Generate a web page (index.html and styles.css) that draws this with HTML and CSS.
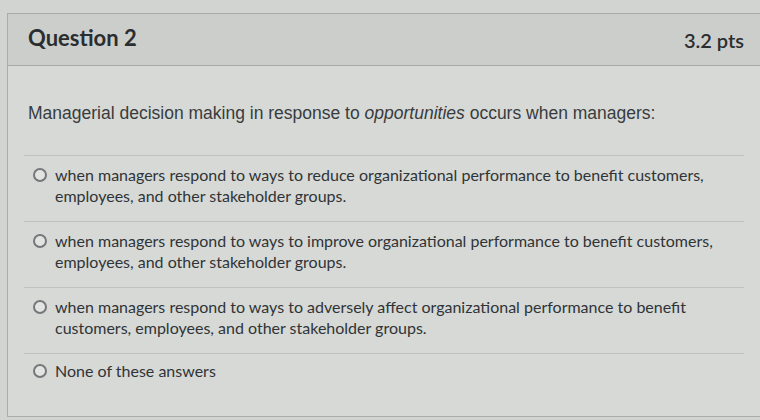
FILE: index.html
```html
<!DOCTYPE html>
<html>
<head>
<meta charset="utf-8">
<link rel="stylesheet" href="styles.css">
</head>
<body>
<div class="card">
  <div class="card-header">
    <h2 class="q-title">Question 2</h2>
    <span class="q-pts">3.2 pts</span>
  </div>
  <div class="card-body">
    <p class="q-text">Managerial decision making in response to <em>opportunities</em> occurs when managers:</p>
    <div class="answers">
      <label class="answer">
        <span class="radio"></span>
        <span class="answer-text">when managers respond to ways to reduce organizational performance to benefit customers, employees, and other stakeholder groups.</span>
      </label>
      <label class="answer">
        <span class="radio"></span>
        <span class="answer-text">when managers respond to ways to improve organizational performance to benefit customers, employees, and other stakeholder groups.</span>
      </label>
      <label class="answer">
        <span class="radio"></span>
        <span class="answer-text">when managers respond to ways to adversely affect organizational performance to benefit customers, employees, and other stakeholder groups.</span>
      </label>
      <label class="answer answer-last">
        <span class="radio"></span>
        <span class="answer-text">None of these answers</span>
      </label>
    </div>
  </div>
</div>
</body>
</html>
```

FILE: styles.css
```css
html, body {
  margin: 0;
  padding: 0;
  background: #d1d4d1;
  overflow: hidden;
}
body {
  width: 760px;
  height: 420px;
  padding-top: 13px;
  padding-left: 7px;
  box-sizing: border-box;
}
.card {
  width: 780px;
  border: 1px solid #a9adaa;
  background: #d6d9d6;
}
.card-header {
  height: 51px;
  background: #cbcecb;
  border-bottom: 1px solid #a7aba8;
  display: flex;
  align-items: center;
  justify-content: space-between;
  padding: 0 44px 0 20px;
}
.q-title {
  margin: 0 0 4px 0;
  font-family: Lato, "Liberation Sans", sans-serif;
  font-weight: 700;
  font-size: 22px;
  color: #2b2e30;
}
.q-pts {
  font-family: Lato, "Liberation Sans", sans-serif;
  font-weight: 600;
  font-size: 20px;
  color: #2b2e30;
  margin-top: 0;
}
.card-body {
  padding: 35px 0 0 20px;
}
.q-text {
  margin: 0 0 30px 0;
  font-family: "Liberation Sans", Arial, sans-serif;
  font-size: 17.5px;
  line-height: 24px;
  color: #383c3e;
}
.answers {
  width: 720px;
  margin-left: -4px;
}
.answer {
  display: flex;
  align-items: flex-start;
  border-top: 1px solid #bfc2bf;
  padding: 8px 20px 15px 9px;
  height: 42px;
}
.answer-last {
  height: 21px;
  padding-top: 6px;
  padding-bottom: 35px;
}
.radio {
  flex: none;
  box-sizing: border-box;
  width: 14px;
  height: 14px;
  border: 2px solid #74787a;
  border-radius: 50%;
  background: #e2e4e2;
  margin: 4px 8px 0 0;
}
.answer-text {
  max-width: 680px;
  font-family: Lato, "Liberation Sans", sans-serif;
  font-size: 16px;
  line-height: 21px;
  color: #303436;
}
```
